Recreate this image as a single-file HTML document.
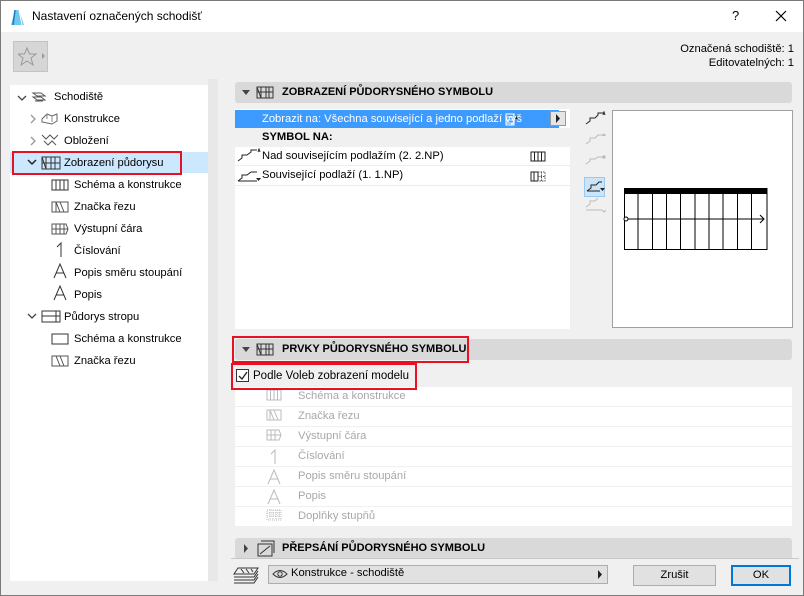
<!DOCTYPE html>
<html><head><meta charset="utf-8"><style>
*{margin:0;padding:0;box-sizing:border-box}
body{width:804px;height:596px;overflow:hidden;font-family:"Liberation Sans",sans-serif;font-size:11.2px;color:#000;background:#f0f0f0;position:relative}
.abs{position:absolute}
.win{position:absolute;left:0;top:0;width:804px;height:596px;border:1px solid #7a7a7a;background:#f0f0f0}
.title{position:absolute;left:0;top:0;width:802px;height:31px;background:#fff}
.tree{left:9px;top:84px;width:198px;height:496px;background:#fff}
.tr{position:absolute;height:20px;line-height:20px;white-space:nowrap}
.hdr{position:absolute;left:234px;width:557px;height:21px;background:#d9d9d9;border-radius:3px;font-weight:bold;line-height:21px;font-size:11px}
.hdr .t{position:absolute;left:47px}
.tri{position:absolute;left:7px;top:8px;width:0;height:0;border-left:4px solid transparent;border-right:4px solid transparent;border-top:5px solid #444}
.row{position:absolute;left:234px;width:557px;height:19px;background:#fff;line-height:19px;color:#a8a8a8}
.row span{position:absolute;left:63px}
.ic{position:absolute}
.btn{position:absolute;height:21px;background:#e1e1e1;border:1px solid #adadad;text-align:center;line-height:19px}
.red{position:absolute;border:2px solid #e81123;z-index:5}
</style></head><body>
<div class="win">
<div class="title">
 <svg class="ic" style="left:9px;top:8px" width="15" height="17"><path d="M1 16L5 1H9L14 16Z" fill="#6fc6ef"/><path d="M5 1L3 16" stroke="#1a7fc2" stroke-width="1.5"/><path d="M9 1L12 16" stroke="#fff" stroke-width="1"/></svg>
 <div class="abs" style="left:31px;top:8px;font-size:12px">Nastavení označených schodišť</div>
 <div class="abs" style="left:731px;top:7px;font-size:13px">?</div>
 <svg class="ic" style="left:774px;top:9px" width="12" height="12"><path d="M1 1L11 11M11 1L1 11" stroke="#000" stroke-width="1.2"/></svg>
</div>

<div class="abs" style="left:12px;top:40px;width:35px;height:31px;background:#d6d6d6;border:1px solid #c4c4c4"></div>
<svg class="ic" style="left:17px;top:46px" width="28" height="20"><path d="M9 1L11.5 7H18L13 11L15 18L9 14L3 18L5 11L0 7H6.5Z" fill="none" stroke="#999"/><path d="M24 6L27 9L24 12Z" fill="#999"/></svg>
<div class="abs" style="right:9px;top:41px;text-align:right;line-height:14px">Označená schodiště: 1<br>Editovatelných: 1</div>

<div class="abs tree">
 <div class="abs" style="left:0;top:67px;width:198px;height:21px;background:#cce8ff"></div>
</div>
<div class="red" style="left:11px;top:150px;width:170px;height:24px"></div>
<div class="abs" style="left:207px;top:78px;width:10px;height:502px;background:#e8e8e8"></div>
<!-- tree items -->
<svg class="ic" style="left:16px;top:93px" width="10" height="8"><path d="M1 2L5 6L9 2" stroke="#444" fill="none" stroke-width="1.3"/></svg>
<svg class="ic" style="left:30px;top:89px" width="18" height="14"><path d="M2 3H10L14 6H6ZM2 7H10L14 10H6ZM4 11H12" stroke="#555" fill="none"/></svg>
<div class="tr" style="left:53px;top:86px">Schodiště</div>
<svg class="ic" style="left:28px;top:113px" width="8" height="10"><path d="M2 1L6 5L2 9" stroke="#999" fill="none" stroke-width="1.3"/></svg>
<svg class="ic" style="left:39px;top:110px" width="20" height="16"><path d="M2 8L7 3L12 5L17 3V10L12 13L2 11Z" stroke="#666" fill="none"/><path d="M7 3V8M12 5V11" stroke="#888"/></svg>
<div class="tr" style="left:63px;top:108px">Konstrukce</div>
<svg class="ic" style="left:28px;top:135px" width="8" height="10"><path d="M2 1L6 5L2 9" stroke="#999" fill="none" stroke-width="1.3"/></svg>
<svg class="ic" style="left:39px;top:131px" width="20" height="17"><path d="M2 3L6 7L10 3L14 7L18 3M4 9L8 13L12 9L16 13" stroke="#555" fill="none"/></svg>
<div class="tr" style="left:63px;top:130px">Obložení</div>
<svg class="ic" style="left:26px;top:157px" width="10" height="8"><path d="M1 2L5 6L9 2" stroke="#222" fill="none" stroke-width="1.5"/></svg>
<svg class="ic" style="left:40px;top:155px" width="20" height="14"><path d="M1 1H19V13H1ZM5 1V13M10 1V13M14 1V13M1 7H19M1 1L5 13" stroke="#333" fill="none"/></svg>
<div class="tr" style="left:63px;top:152px">Zobrazení půdorysu</div>

<svg class="ic" style="left:50px;top:178px" width="18" height="12"><path d="M1 1H17V11H1ZM5 1V11M9 1V11M13 1V11" stroke="#333" fill="none"/></svg>
<div class="tr" style="left:73px;top:174px">Schéma a konstrukce</div>
<svg class="ic" style="left:50px;top:200px" width="18" height="12"><path d="M1 1H17V11H1ZM5 1L9 11M9 1L13 11M5 1V11" stroke="#555" fill="none"/></svg>
<div class="tr" style="left:73px;top:196px">Značka řezu</div>
<svg class="ic" style="left:50px;top:222px" width="18" height="12"><path d="M1 1H15L17 6L15 11H1ZM5 1V11M9 1V11M13 1V11M1 6H17" stroke="#555" fill="none"/></svg>
<div class="tr" style="left:73px;top:218px">Výstupní čára</div>
<svg class="ic" style="left:54px;top:241px" width="10" height="16"><path d="M2 5L6 1V15" stroke="#333" fill="none"/></svg>
<div class="tr" style="left:73px;top:240px">Číslování</div>
<svg class="ic" style="left:52px;top:262px" width="14" height="16"><path d="M1 15L7 1L13 15M3.5 10H10.5" stroke="#333" fill="none"/></svg>
<div class="tr" style="left:73px;top:262px">Popis směru stoupání</div>
<svg class="ic" style="left:52px;top:284px" width="14" height="16"><path d="M1 15L7 1L13 15M3.5 10H10.5" stroke="#333" fill="none"/></svg>
<div class="tr" style="left:73px;top:284px">Popis</div>
<svg class="ic" style="left:26px;top:311px" width="10" height="8"><path d="M1 2L5 6L9 2" stroke="#444" fill="none" stroke-width="1.3"/></svg>
<svg class="ic" style="left:40px;top:309px" width="20" height="13"><path d="M1 1H19V12H1ZM1 6H19M15 1V12" stroke="#333" fill="none"/></svg>
<div class="tr" style="left:63px;top:306px">Půdorys stropu</div>
<svg class="ic" style="left:50px;top:332px" width="18" height="12"><rect x="1" y="1" width="16" height="10" stroke="#333" fill="none"/></svg>
<div class="tr" style="left:73px;top:328px">Schéma a konstrukce</div>
<svg class="ic" style="left:50px;top:354px" width="18" height="12"><path d="M1 1H17V11H1ZM5 1L9 11M9 1L13 11" stroke="#555" fill="none"/></svg>
<div class="tr" style="left:73px;top:350px">Značka řezu</div>

<!-- header 1 -->
<div class="hdr" style="top:81px"><div class="tri"></div>
<svg class="ic" style="left:21px;top:4px" width="18" height="13"><path d="M1 1H17V12H1ZM5 1V12M10 1V12M13 1V12M1 6H17M1 1L5 12" stroke="#333" fill="none"/></svg>
<div class="t">ZOBRAZENÍ PŮDORYSNÉHO SYMBOLU</div></div>
<div class="abs" style="left:234px;top:108px;width:335px;height:220px;background:#fff"></div>
<div class="abs" style="left:234px;top:109px;width:324px;height:18px;background:#3d9bff;color:#fff;line-height:18px"><span style="position:absolute;left:27px">Zobrazit na: Všechna související a jedno podlaží výš</span></div>
<svg class="ic" style="left:503px;top:110px" width="16" height="16"><path d="M2 3H10V14H2ZM2 6H10M2 9H10M2 12H10" stroke="#fff" fill="none"/><path d="M11 8L14 8L12.5 5Z" fill="#222"/></svg>
<div class="abs" style="left:549px;top:110px;width:16px;height:15px;background:#e5e5e5;border:1px solid #999"></div>
<svg class="ic" style="left:554px;top:113px" width="6" height="9"><path d="M1 0L5 4.5L1 9Z" fill="#222"/></svg>
<div class="abs" style="left:234px;top:127px;width:335px;height:19px;background:#f0f0f0;font-weight:bold;line-height:19px"><span style="position:absolute;left:27px">SYMBOL NA:</span></div>
<div class="abs" style="left:234px;top:146px;width:335px;height:19px;border-bottom:1px solid #ececec;line-height:19px"><span style="position:absolute;left:27px">Nad souvisejícím podlažím (2. 2.NP)</span></div>
<svg class="ic" style="left:236px;top:147px" width="24" height="14"><path d="M1 13L5 10V7H10L14 4V2H20M21 4L22 1L23 4" stroke="#222" fill="none"/></svg>
<svg class="ic" style="left:529px;top:150px" width="16" height="11"><path d="M1 1H15V10H1ZM4.5 1V10M8 1V10M11.5 1V10" stroke="#222" fill="none"/></svg>
<div class="abs" style="left:234px;top:165px;width:335px;height:20px;border-bottom:1px solid #ececec;line-height:19px"><span style="position:absolute;left:27px">Související podlaží (1. 1.NP)</span></div>
<svg class="ic" style="left:236px;top:168px" width="24" height="14"><path d="M1 12L5 9V6H10L14 3H20M1 12H20" stroke="#222" fill="none"/><path d="M19 9L24 9L21.5 12Z" fill="#222"/></svg>
<svg class="ic" style="left:529px;top:170px" width="16" height="11"><path d="M1 1H8V10H1ZM4 1V10" stroke="#222" fill="none"/><path d="M8 1H15V10H8M11.5 1V10M8 5.5H15" stroke="#555" fill="none" stroke-dasharray="1.5 1"/></svg>

<div class="abs" style="left:577px;top:108px;width:34px;height:220px;background:#f0f0f0"></div>
<svg class="ic" style="left:583px;top:110px" width="22" height="110"><path d="M2 13L6 10V7H11L14 4V2H20" stroke="#222" fill="none"/><path d="M19 4L20 1L21 4" stroke="#222" fill="none"/>
<g stroke="#bbb" fill="none"><path d="M2 33L6 30V27H11L14 24H19"/><path d="M2 53L6 50V48H11L14 46H20"/><circle cx="20" cy="46" r="1.2" fill="#bbb"/><path d="M2 96L6 93V90H11L14 87"/><path d="M2 99H18L20 101L22 99"/></g>
<path d="M18 25L22 25L20 22Z" fill="#bbb"/></svg>
<div class="abs" style="left:583px;top:176px;width:21px;height:20px;background:#cce4f7;border:1px solid #99c9ef"></div>
<svg class="ic" style="left:584px;top:179px" width="22" height="14"><path d="M2 11L6 8V5H11L14 2H17M2 11H15" stroke="#222" fill="none"/><path d="M15 8L20 8L17.5 11Z" fill="#222"/></svg>
<div class="abs" style="left:611px;top:109px;width:181px;height:218px;background:#fff;border:1px solid #a0a0a0"></div>
<svg class="ic" style="left:622px;top:186px" width="146" height="64"><rect x="1" y="1" width="143" height="6" fill="#000"/><rect x="1.5" y="1.5" width="142.5" height="61" fill="none" stroke="#000"/><path d="M15 7V62M29.5 7V62M43.5 7V62M57.5 7V62M72 7V62M86 7V62M100 7V62M114.5 7V62M128.5 7V62" stroke="#000"/><path d="M3 32H141M137 28L141 32L137 36" stroke="#000" fill="none"/><circle cx="3" cy="32" r="2" fill="#fff" stroke="#000"/></svg>

<!-- header 2 -->
<div class="hdr" style="top:338px"><div class="tri"></div>
<svg class="ic" style="left:21px;top:4px" width="18" height="13"><path d="M1 1H17V12H1ZM5 1V12M10 1V12M13 1V12M1 6H17M1 1L5 12" stroke="#333" fill="none"/></svg>
<div class="t">PRVKY PŮDORYSNÉHO SYMBOLU</div></div>
<div class="red" style="left:231px;top:335px;width:237px;height:27px"></div>
<div class="red" style="left:230px;top:362px;width:186px;height:27px"></div>
<div class="abs" style="left:235px;top:368px;width:13px;height:13px;border:1px solid #333;background:#fff"></div>
<svg class="ic" style="left:236px;top:369px" width="12" height="12"><path d="M2 6L5 9L10 2" stroke="#222" fill="none" stroke-width="1.3"/></svg>
<div class="abs" style="left:252px;top:369px;font-size:11.5px">Podle Voleb zobrazení modelu</div>

<div class="row" style="top:386px"><span>Schéma a konstrukce</span></div>
<div class="row" style="top:406px"><span>Značka řezu</span></div>
<div class="row" style="top:426px"><span>Výstupní čára</span></div>
<div class="row" style="top:446px"><span>Číslování</span></div>
<div class="row" style="top:466px"><span>Popis směru stoupání</span></div>
<div class="row" style="top:486px"><span>Popis</span></div>
<div class="row" style="top:506px"><span>Doplňky stupňů</span></div>
<svg class="ic" style="left:264px;top:388px" width="20" height="136" stroke="#bbb" fill="none">
<path d="M2 1H16V11H2ZM5.5 1V11M9 1V11M12.5 1V11"/>
<path d="M2 21H16V31H2ZM5 21L9 31M9 21L13 31M5 21V31"/>
<path d="M2 41H14L16 46L14 51H2ZM6 41V51M10 41V51M2 46H16"/>
<path d="M6 65L10 61V75"/>
<path d="M3 95L9 81L15 95M5 90H13"/>
<path d="M3 115L9 101L15 115M5 110H13"/>
<path d="M2 121H16V131H2ZM5 121V131M8 121V131M11 121V131M14 121V131M2 124H16M2 127H16" stroke-dasharray="1 1"/>
</svg>

<!-- header 3 -->
<div class="hdr" style="top:537px">
<svg class="ic" style="left:8px;top:6px" width="6" height="9"><path d="M1 0L5 4.5L1 9Z" fill="#444"/></svg>
<svg class="ic" style="left:22px;top:2px" width="18" height="17"><path d="M1 4H15V16H1Z M4 1H17V13" stroke="#333" fill="none"/><path d="M3 14L13 6" stroke="#333"/></svg>
<div class="t">PŘEPSÁNÍ PŮDORYSNÉHO SYMBOLU</div></div>
<div class="abs" style="left:230px;top:557px;width:568px;height:1px;background:#c8c8c8"></div>

<!-- bottom -->
<svg class="ic" style="left:231px;top:565px" width="28" height="20"><path d="M6 2H26L22 8H2ZM2 11H22L26 5M2 14H22L26 8M2 17H22L26 11" stroke="#333" fill="none"/><path d="M9 3L12 7M14 3L17 7M19 3L21 6" stroke="#333"/></svg>
<div class="abs" style="left:267px;top:564px;width:340px;height:19px;background:#e1e1e1;border:1px solid #adadad"></div>
<svg class="ic" style="left:271px;top:568px" width="16" height="10"><path d="M1 5Q8 -2 15 5Q8 12 1 5Z" stroke="#333" fill="none"/><circle cx="8" cy="5" r="2.2" stroke="#333" fill="none"/></svg>
<div class="abs" style="left:290px;top:566px">Konstrukce - schodiště</div>
<svg class="ic" style="left:597px;top:569px" width="5" height="9"><path d="M0 0L4 4.5L0 9Z" fill="#222"/></svg>
<div class="btn" style="left:632px;top:564px;width:83px">Zrušit</div>
<div class="btn" style="left:730px;top:564px;width:60px;border:2px solid #0078d7;line-height:17px">OK</div>
</div>
</body></html>
